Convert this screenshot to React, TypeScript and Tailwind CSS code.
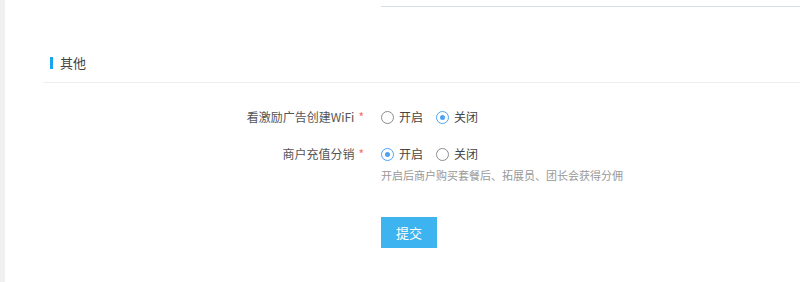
import React, { useState } from "react";

const font = { fontFamily: '"Noto Sans CJK SC", "Noto Sans", sans-serif' };

function Radio({ checked, label, onClick }: { checked: boolean; label: string; onClick: () => void }) {
  return (
    <button type="button" onClick={onClick} className="flex items-center gap-[5px] cursor-pointer">
      {checked ? (
        <span className="w-[13px] h-[13px] rounded-full border-[1.5px] border-[#4da3f3] flex items-center justify-center">
          <span className="w-[5px] h-[5px] rounded-full bg-[#4da3f3]" />
        </span>
      ) : (
        <span className="w-[13px] h-[13px] rounded-full border-[1.5px] border-[#8c8c8c]" />
      )}
      <span className="text-[12px] text-[#444] leading-none">{label}</span>
    </button>
  );
}

function Row({ label, children, className }: { label: string; children: React.ReactNode; className: string }) {
  return (
    <div className={`flex items-center ${className}`}>
      <div className="w-[321px] text-right text-[12px] text-[#555] leading-none">
        {label}
        <span className="ml-[4px] text-[#f56c6c]">*</span>
      </div>
      <div className="ml-[17px] flex items-center gap-[13px]">{children}</div>
    </div>
  );
}

export default function App() {
  const [adWifi, setAdWifi] = useState(false);
  const [recharge, setRecharge] = useState(true);

  return (
    <div className="flex min-h-[282px] bg-white" style={font}>
      <div className="w-[5px] bg-[#f0f0f0]" />
      <div className="flex-1">
        <div className="pl-[376px] pt-[6px]">
          <div className="h-px bg-[#d8dce5]" />
        </div>

        <div className="mt-[46px] h-[20px] pl-[45px] flex items-center gap-[7px]">
          <span className="w-[3px] h-[12px] bg-[#1aa3f0]" />
          <span className="text-[13px] text-[#444]">其他</span>
        </div>
        <div className="mt-[9px] ml-[38px] h-px bg-[#eeeeee]" />

        <div className="pl-[38px]">
          <Row label="看激励广告创建WiFi" className="mt-[19px] h-[30px]">
            <Radio checked={adWifi} label="开启" onClick={() => setAdWifi(true)} />
            <Radio checked={!adWifi} label="关闭" onClick={() => setAdWifi(false)} />
          </Row>
          <Row label="商户充值分销" className="mt-[10px] h-[24px]">
            <Radio checked={recharge} label="开启" onClick={() => setRecharge(true)} />
            <Radio checked={!recharge} label="关闭" onClick={() => setRecharge(false)} />
          </Row>
          <div className="mt-px pl-[338px] h-[16px] flex items-center text-[11px] text-[#999]">
            开启后商户购买套餐后、拓展员、团长会获得分佣
          </div>
          <div className="mt-[34px] pl-[338px]">
            <button type="button" className="w-[56px] h-[31px] bg-[#3db3ef] text-white text-[13px]">
              提交
            </button>
          </div>
        </div>
      </div>
    </div>
  );
}
